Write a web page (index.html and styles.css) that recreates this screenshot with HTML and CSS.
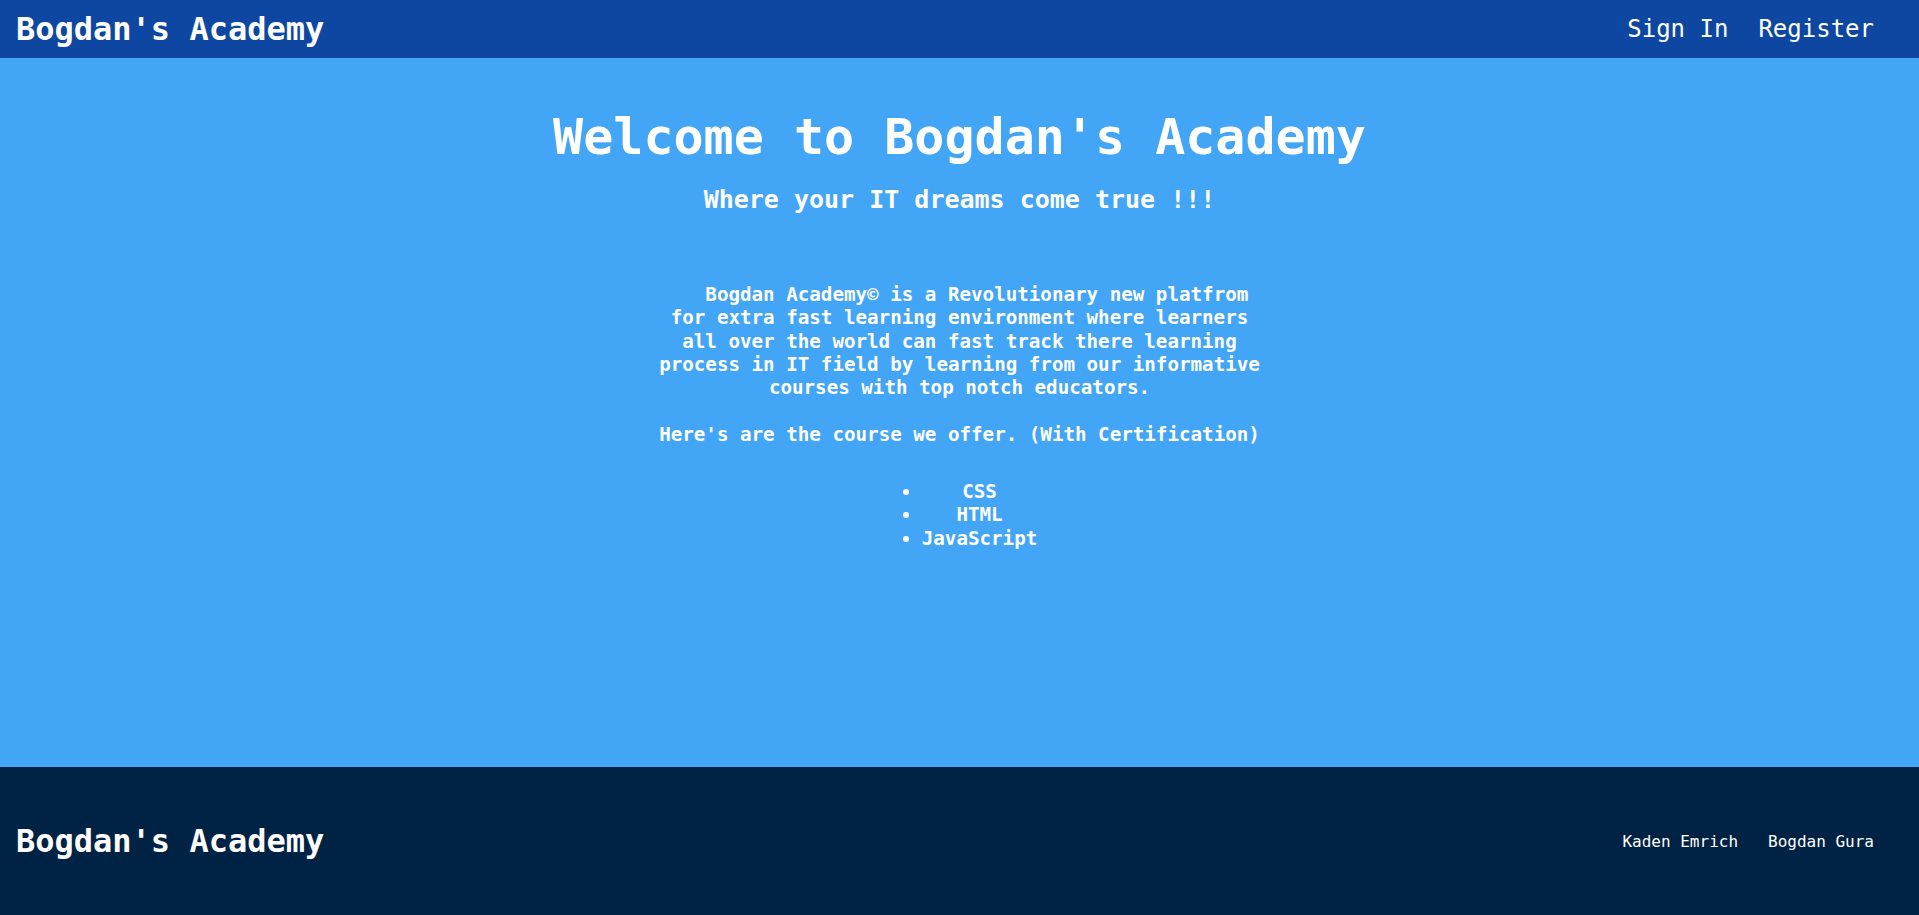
FILE: index.html
```html
<!DOCTYPE html>
<html lang="en">
<head>
<meta charset="utf-8">
<title>Bogdan's Academy</title>
<link rel="stylesheet" href="styles.css">
</head>
<body>
<div class="page">
  <header class="topbar">
    <div class="brand">Bogdan's Academy</div>
    <nav class="nav">
      <a class="nav-link" href="#">Sign In</a>
      <a class="nav-link" href="#">Register</a>
    </nav>
  </header>
  <main class="hero">
    <h1 class="hero-title">Welcome to Bogdan's Academy</h1>
    <h2 class="hero-sub">Where your IT dreams come true !!!</h2>
    <p class="intro">Bogdan Academy© is a Revolutionary new platfrom for extra fast learning environment where learners all over the world can fast track there learning process in IT field by learning from our informative courses with top notch educators.</p>
    <p class="offer">Here's are the course we offer. (With Certification)</p>
    <ul class="courses">
      <li>CSS</li>
      <li>HTML</li>
      <li>JavaScript</li>
    </ul>
  </main>
  <footer class="footer">
    <div class="brand">Bogdan's Academy</div>
    <div class="authors">
      <span class="author">Kaden Emrich</span>
      <span class="author">Bogdan Gura</span>
    </div>
  </footer>
</div>
</body>
</html>
```
FILE: styles.css
```css
* { box-sizing: border-box; }
html, body { margin: 0; padding: 0; }
body {
  font-family: "DejaVu Sans Mono", "Liberation Mono", monospace;
  color: #ffffff;
  background: #42a5f5;
}
.page {
  display: flex;
  flex-direction: column;
  height: 100vh;
}
.topbar {
  height: 58px;
  flex: 0 0 58px;
  background: #0d47a1;
  display: flex;
  align-items: center;
  justify-content: space-between;
  padding: 0 45px 0 16px;
}
.brand {
  font-size: 32px;
  font-weight: bold;
  color: #ffffff;
}
.nav {
  display: flex;
  gap: 30px;
}
.nav-link {
  color: #ffffff;
  text-decoration: none;
  font-size: 24px;
}
.hero {
  flex: 1;
  background: #42a5f5;
  display: flex;
  flex-direction: column;
  align-items: center;
  text-align: center;
  font-weight: bold;
}
.hero-title {
  font-size: 50px;
  margin: 50px 0 0;
  line-height: normal;
}
.hero-sub {
  font-size: 25px;
  margin: 19px 0 0;
  line-height: normal;
}
.intro {
  font-size: 19.2px;
  line-height: 23.3px;
  width: 53ch;
  text-indent: 3ch;
  margin: 69px 0 0;
}
.offer {
  font-size: 19.2px;
  line-height: 23.3px;
  margin: 23.3px 0 0;
}
.courses {
  font-size: 19.2px;
  line-height: 23.3px;
  margin: 34px 0 0;
  padding-left: 40px;
  list-style: disc outside;
}
.footer {
  height: 148px;
  flex: 0 0 148px;
  background: #002244;
  display: flex;
  align-items: center;
  justify-content: space-between;
  padding: 0 45px 0 16px;
}
.authors {
  display: flex;
  gap: 30px;
}
.author {
  font-size: 16px;
}
```
